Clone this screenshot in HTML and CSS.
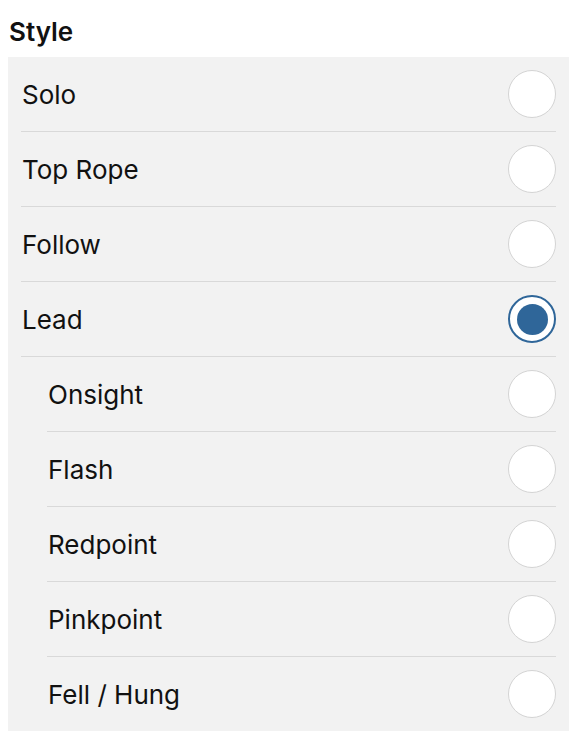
FILE: index.html
```html
<!DOCTYPE html>
<html lang="en">
<head>
  <meta charset="UTF-8">
  <title>Style</title>
  <meta name="viewport" content="width=device-width, initial-scale=1.0">
  <link rel="stylesheet" href="styles.css">
</head>
<body>

  <h2 class="section-title">Style</h2>

  <ul class="choice-list">
    <li class="choice"><span>Solo</span><span class="radio"></span></li>
    <li class="choice"><span>Top Rope</span><span class="radio"></span></li>
    <li class="choice"><span>Follow</span><span class="radio"></span></li>
    <li class="choice"><span>Lead</span><span class="radio checked"></span></li>
    <li class="choice sub"><span>Onsight</span><span class="radio"></span></li>
    <li class="choice sub"><span>Flash</span><span class="radio"></span></li>
    <li class="choice sub"><span>Redpoint</span><span class="radio"></span></li>
    <li class="choice sub"><span>Pinkpoint</span><span class="radio"></span></li>
    <li class="choice sub"><span>Fell / Hung</span><span class="radio"></span></li>
  </ul>

</body>
</html>
```

FILE: styles.css
```css
* {
  box-sizing: border-box;
}
body {
  margin: 0;
  padding: 0 9px 0 8px;
  background-color: white;
  font-family: Inter, "Liberation Sans", sans-serif;
  color: #111;
}
.section-title {
  margin: 0;
  height: 57px;
  padding-top: 17px;
  padding-left: 1px;
  font-size: 26px;
  line-height: 30px;
  font-weight: 600;
}
.choice-list {
  list-style: none;
  margin: 0;
  padding: 0;
  background-color: #f2f2f2;
}
.choice {
  display: flex;
  align-items: center;
  justify-content: space-between;
  height: 75px;
  margin: 0 13px;
  border-bottom: 1px solid #d9d9d9;
  font-size: 26px;
}
.choice:last-child {
  border-bottom: none;
  height: 74px;
}
.choice span:first-child {
  padding-left: 1px;
}
.choice.sub {
  margin-left: 39px;
}
.radio {
  width: 48px;
  height: 48px;
  border-radius: 50%;
  background-color: white;
  border: 1.5px solid #d4d4d4;
  display: flex;
  align-items: center;
  justify-content: center;
}
.radio.checked {
  border: 2px solid #2f6699;
}
.radio.checked::after {
  content: "";
  width: 31px;
  height: 31px;
  border-radius: 50%;
  background-color: #2f6699;
}
```
